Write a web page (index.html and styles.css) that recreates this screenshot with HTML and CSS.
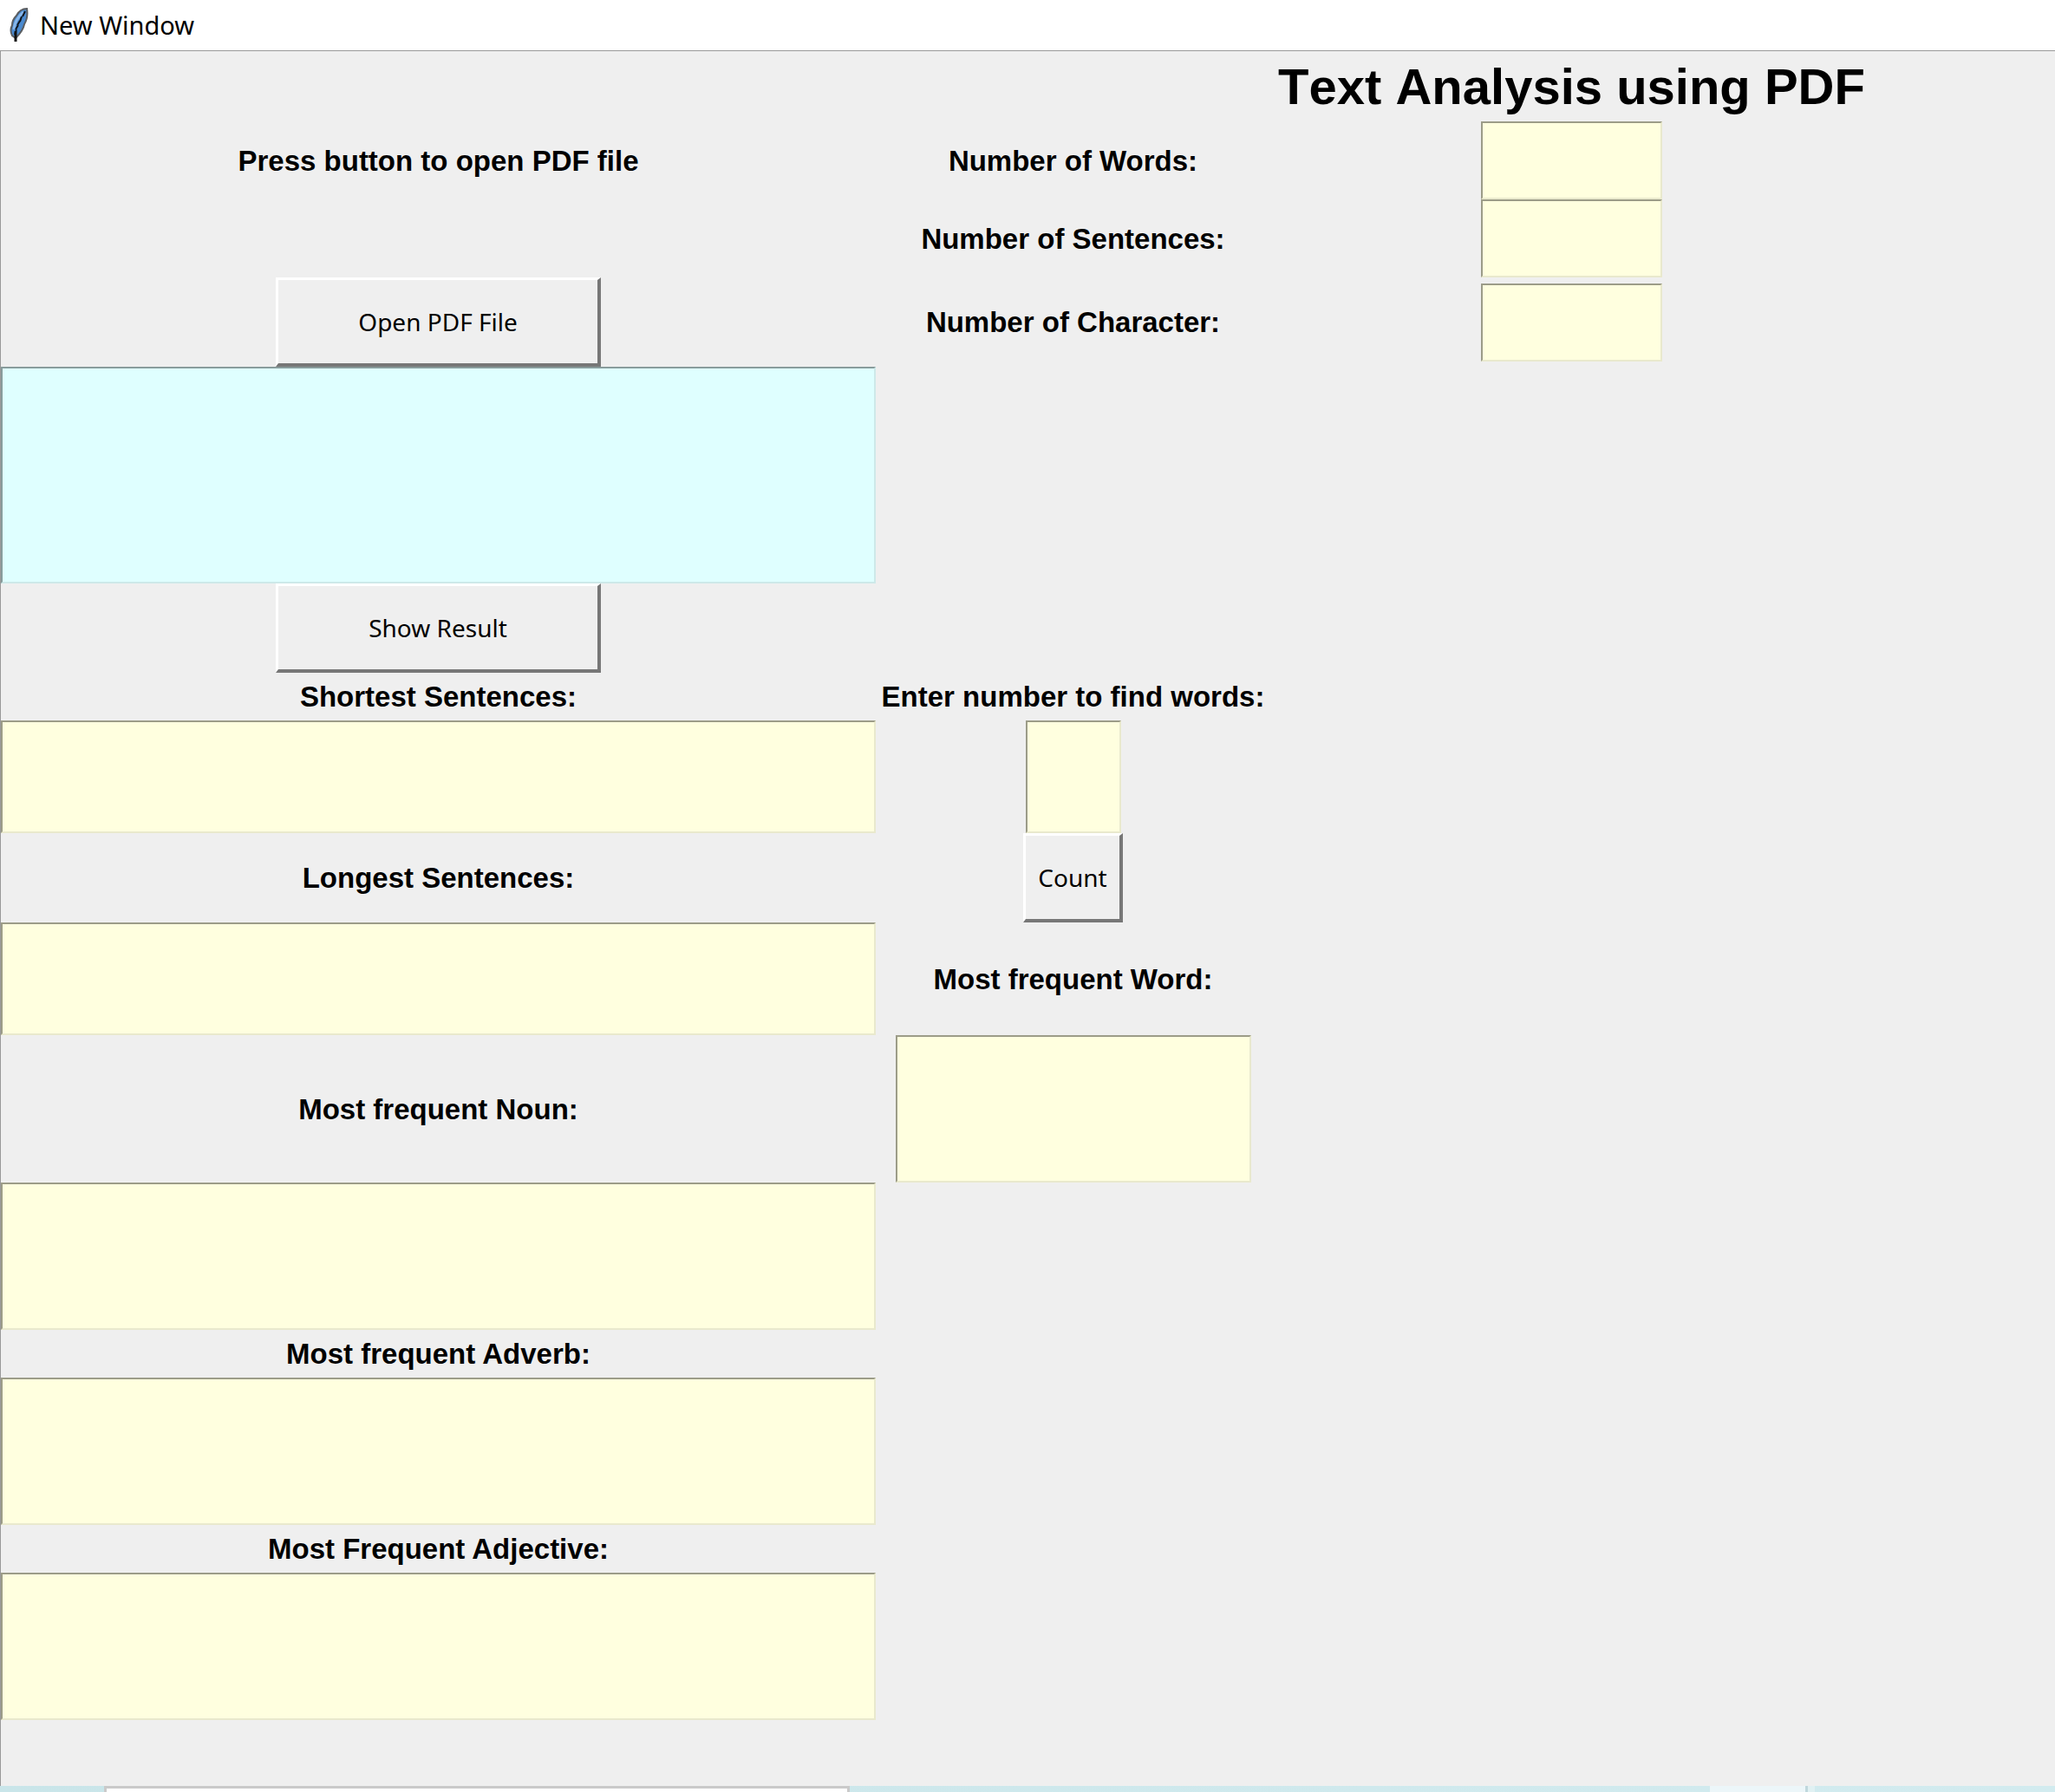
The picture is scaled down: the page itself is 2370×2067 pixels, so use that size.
FILE: index.html
```html
<!DOCTYPE html>
<html lang="en">
<head>
<meta charset="utf-8">
<title>New Window</title>
<link rel="stylesheet" href="styles.css">
</head>
<body>
<div class="window">
  <header class="titlebar">
    <svg class="feather" viewBox="0 0 24 40" aria-hidden="true">
      <path d="M21 1 C15 1 11 5 9 9 C5 13 4 17 4 20 C2 24 2 28 4 32 L8 35 C13 30 17 25 18 19 C21 14 22 7 21 1 Z" fill="#4a8ad0" stroke="#5b5e62" stroke-width="2"/>
      <path d="M17 5 C12 9 7 16 6 25" fill="none" stroke="#86b6ea" stroke-width="3"/>
      <path d="M19 4 L16 10 M15 10 L13 16 M13 15 L10 20 M11 20 L8 25 M9 25 L7 31" fill="none" stroke="#10151d" stroke-width="2"/>
      <path d="M8 27 L8 39" fill="none" stroke="#111" stroke-width="3"/>
    </svg>
    <span class="caption">New Window</span>
  </header>
  <main class="form">
    <h1 class="heading">Text Analysis using PDF</h1>

    <label class="label left r2" for="open">Press button to open PDF file</label>
    <button class="button wide left r4" id="open" type="button">Open PDF File</button>
    <textarea class="field file left r5" aria-label="PDF file text"></textarea>
    <button class="button wide left r6" type="button">Show Result</button>
    <label class="label left r7" for="shortest">Shortest Sentences:</label>
    <textarea class="field medium left r8" id="shortest"></textarea>
    <label class="label left r9" for="longest">Longest Sentences:</label>
    <textarea class="field medium left r10" id="longest"></textarea>
    <label class="label left r11" for="noun">Most frequent Noun:</label>
    <textarea class="field tall left r12" id="noun"></textarea>
    <label class="label left r13" for="adverb">Most frequent Adverb:</label>
    <textarea class="field tall left r14" id="adverb"></textarea>
    <label class="label left r15" for="adjective">Most Frequent Adjective:</label>
    <textarea class="field tall left r16" id="adjective"></textarea>

    <label class="label middle r2" for="words">Number of Words:</label>
    <label class="label middle r3" for="sentences">Number of Sentences:</label>
    <label class="label middle r4" for="characters">Number of Character:</label>
    <label class="label middle r7" for="number">Enter number to find words:</label>
    <input class="field medium number middle r8" id="number" type="text">
    <button class="button middle r9" type="button">Count</button>
    <label class="label middle r10" for="word">Most frequent Word:</label>
    <textarea class="field tall word middle r11" id="word"></textarea>

    <input class="field short right r2" id="words" type="text">
    <input class="field short right r3" id="sentences" type="text">
    <input class="field short right r4" id="characters" type="text">
  </main>
  <footer class="desktop">
    <div class="search"></div>
    <div class="task"></div>
  </footer>
</div>
</body>
</html>
```
FILE: styles.css
```css
* {
  box-sizing: border-box;
}

body {
  margin: 0;
  background: #efefef;
  color: #000;
}

.window {
  display: flex;
  flex-direction: column;
  min-height: 100vh;
}

.titlebar {
  display: flex;
  align-items: center;
  gap: 12px;
  height: 58px;
  padding: 0 10px;
  background: #fff;
}

.feather {
  width: 24px;
  height: 40px;
}

.caption {
  font: 29px/40px "Noto Sans", sans-serif;
}

.form {
  flex: 1;
  display: grid;
  grid-template-columns: 1009fr 455fr 695fr 210fr;
  align-content: start;
  align-items: center;
  justify-items: center;
  border-top: 1px solid #999;
  border-left: 1px solid #999;
}

.heading {
  grid-area: 1 / 3;
  margin: 0;
  font: bold 58px/81px "Liberation Sans", Arial, sans-serif;
  font-kerning: none;
  white-space: nowrap;
}

.label {
  font: bold 33px/55px "Liberation Sans", Arial, sans-serif;
  white-space: nowrap;
}

.button {
  height: 103px;
  padding: 0 14px;
  border: solid;
  border-width: 3px 4px 4px 3px;
  border-color: #fff #777 #777 #fff;
  background: #efefef;
  color: #000;
  font: 28px/40px "Noto Sans", sans-serif;
}

.wide {
  width: 375px;
}

.field {
  display: block;
  margin: 0;
  padding: 4px;
  border: 2px solid;
  border-color: #9c9c88 #e9e9cd #e9e9cd #9c9c88;
  border-radius: 0;
  outline: 0;
  background: #ffffdf;
  font: 28px/40px "Noto Sans", sans-serif;
  resize: none;
}

.field.left {
  width: 100%;
}

.file {
  height: 250px;
  border-color: #889c9c #cde9e9 #cde9e9 #889c9c;
  background: #dfffff;
}

.short {
  width: 209px;
  height: 90px;
}

.medium {
  height: 130px;
}

.tall {
  height: 170px;
}

.number {
  width: 110px;
}

.word {
  width: 410px;
}

.left { grid-column: 1; }
.middle { grid-column: 2; }
.right { grid-column: 3; }

.r2 { grid-row: 2; }
.r3 { grid-row: 3; }
.r4 { grid-row: 4; }
.r5 { grid-row: 5; }
.r6 { grid-row: 6; }
.r7 { grid-row: 7; }
.r8 { grid-row: 8; }
.r9 { grid-row: 9; }
.r10 { grid-row: 10; }
.r11 { grid-row: 11; }
.r12 { grid-row: 12; }
.r13 { grid-row: 13; }
.r14 { grid-row: 14; }
.r15 { grid-row: 15; }
.r16 { grid-row: 16; }

.desktop {
  display: grid;
  grid-template-columns: 120fr 860fr 992fr 121fr 277fr;
  height: 7px;
  background: linear-gradient(to right, #c9e5e9, #d2ebef);
}

.search {
  grid-column: 2;
  border: 3px solid #cacaca;
  border-bottom: 0;
  background: #fff;
}

.task {
  grid-column: 4;
  border-right: 8px solid #e0f1f3;
  background: #ecf6f9;
  box-shadow: inset -3px 0 #c0d8dd;
}
```
